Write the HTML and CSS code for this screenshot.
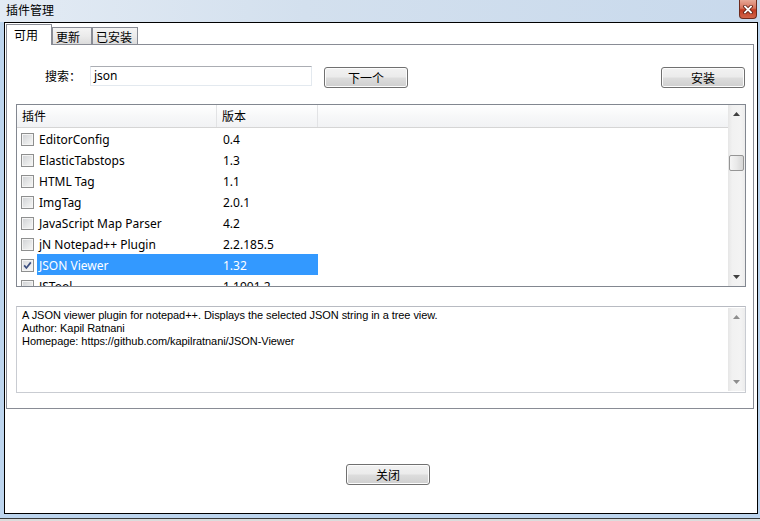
FILE: index.html
```html
<!DOCTYPE html>
<html lang="zh">
<head>
<meta charset="utf-8">
<title>插件管理</title>
<link rel="stylesheet" href="styles.css">
</head>
<body>
<div class="window">
  <div class="titlebar">
    <span class="title">插件管理</span>
    <span class="xbtn"><svg width="10" height="9" viewBox="0 0 10 9"><path d="M2 1.5 L8 7.5 M8 1.5 L2 7.5" stroke="#5a1a0e" stroke-width="3.4" stroke-linecap="square"/><path d="M2 1.5 L8 7.5 M8 1.5 L2 7.5" stroke="#ffffff" stroke-width="1.8" stroke-linecap="square"/></svg></span>
  </div>
  <div class="client">
    <div class="tabs">
      <div class="tab active">可用</div>
      <div class="tab">更新</div>
      <div class="tab wide">已安装</div>
    </div>
    <div class="panel">
      <div class="search-row">
        <span class="search-label">搜索：</span>
        <div class="input">json</div>
        <button class="btn next">下一个</button>
        <span class="spacer"></span>
        <button class="btn install">安装</button>
      </div>
      <div class="list">
        <div class="list-main">
          <div class="header">
            <div class="hcol c1">插件</div>
            <div class="hcol c2">版本</div>
            <div class="hcol c3"></div>
          </div>
          <div class="rows">
            <div class="row"><span class="cb"></span><span class="cells"><span class="name">EditorConfig</span><span class="ver">0.4</span></span></div>
            <div class="row"><span class="cb"></span><span class="cells"><span class="name">ElasticTabstops</span><span class="ver">1.3</span></span></div>
            <div class="row"><span class="cb"></span><span class="cells"><span class="name">HTML Tag</span><span class="ver">1.1</span></span></div>
            <div class="row"><span class="cb"></span><span class="cells"><span class="name">ImgTag</span><span class="ver">2.0.1</span></span></div>
            <div class="row"><span class="cb"></span><span class="cells"><span class="name">JavaScript Map Parser</span><span class="ver">4.2</span></span></div>
            <div class="row"><span class="cb"></span><span class="cells"><span class="name">jN Notepad++ Plugin</span><span class="ver">2.2.185.5</span></span></div>
            <div class="row selected"><span class="cb checked"><svg width="11" height="11" viewBox="0 0 11 11"><path d="M2.2 5.4 L4.4 8 L8.8 2.4" fill="none" stroke="#3d4f80" stroke-width="1.7"/></svg></span><span class="cells"><span class="name">JSON Viewer</span><span class="ver">1.32</span></span></div>
            <div class="row"><span class="cb"></span><span class="cells"><span class="name">JSTool</span><span class="ver">1.1901.2</span></span></div>
          </div>
        </div>
        <div class="vscroll">
          <div class="sbtn"><svg width="17" height="17" viewBox="0 0 17 17"><polygon points="5,11 8.5,7 12,11" fill="#3f3f3f"/></svg></div>
          <div class="track">
            <div class="thumb-space"></div>
            <div class="thumb"></div>
          </div>
          <div class="sbtn"><svg width="17" height="17" viewBox="0 0 17 17"><polygon points="5,6 12,6 8.5,10" fill="#3f3f3f"/></svg></div>
        </div>
      </div>
      <div class="desc">
        <div class="desc-text">
          <div>A JSON viewer plugin for notepad++. Displays the selected JSON string in a tree view.</div>
          <div>Author: Kapil Ratnani</div>
          <div>Homepage: https://github.com/kapilratnani/JSON-Viewer</div>
        </div>
        <div class="vscroll small">
          <div class="sbtn"><svg width="17" height="17" viewBox="0 0 17 17"><polygon points="5,11 8.5,7 12,11" fill="#8d8d8d"/></svg></div>
          <div class="track"></div>
          <div class="sbtn"><svg width="17" height="17" viewBox="0 0 17 17"><polygon points="5,6 12,6 8.5,10" fill="#8d8d8d"/></svg></div>
        </div>
      </div>
    </div>
    <div class="footer">
      <button class="btn closebtn">关闭</button>
    </div>
  </div>
  <div class="bottom-edge"></div>
</div>
</body>
</html>
```

FILE: styles.css
```css
* { box-sizing: border-box; }
html, body { margin: 0; padding: 0; }
body {
  width: 760px;
  height: 521px;
  overflow: hidden;
  background: #bcd4ed;
  font-family: "Noto Sans CJK SC", "Noto Sans", sans-serif;
  font-size: 12px;
  color: #000;
}
.window {
  width: 760px;
  height: 521px;
  display: flex;
  flex-direction: column;
  background: #bdd5ee;
}
.titlebar {
  height: 22px;
  display: flex;
  align-items: flex-start;
  background: linear-gradient(to right, #e3ebf4 0%, #d3e0ee 40%, #c8d9ec 100%);
}
.title {
  margin-left: 6px;
  margin-top: 2px;
  line-height: 16px;
  font-size: 12px;
  color: #000;
  font-family: "Noto Sans CJK SC", sans-serif;
}
.xbtn {
  margin-left: auto;
  margin-right: 3px;
  width: 18px;
  height: 19px;
  border: 1px solid #6e2a1c;
  border-top: none;
  border-radius: 0 0 4px 4px;
  background: linear-gradient(to bottom, #e7a896 0%, #d7735c 45%, #c03a21 55%, #d2654a 100%);
  display: flex;
  align-items: center;
  justify-content: center;
}
.client {
  margin-left: 4px;
  width: 754px;
  height: 492px;
  border: 1px solid #000;
  background: #fff;
  display: flex;
  flex-direction: column;
}
.tabs {
  height: 21px;
  margin-left: 1px;
  display: flex;
  align-items: flex-end;
}
.tab {
  height: 17px;
  width: 40px;
  border: 1px solid #898c95;
  border-bottom: none;
  background: linear-gradient(to bottom, #f4f4f4 0%, #ebebeb 50%, #dcdcdc 100%);
  padding-left: 3px;
  line-height: 17px;
  font-size: 12px;
}
.tab.wide { width: 46px; }
.tab.active {
  position: relative;
  z-index: 1;
  width: 46px;
  height: 21px;
  margin-bottom: -1px;
  margin-right: 0;
  background: #fff;
  padding-left: 7px;
  line-height: 20px;
}
.panel {
  margin-left: 1px;
  width: 748px;
  height: 365px;
  border: 1px solid #898c95;
  padding: 21px 7px 0 9px;
  display: flex;
  flex-direction: column;
}
.search-row {
  display: flex;
  align-items: flex-start;
  height: 22px;
}
.search-label {
  margin-left: 29px;
  width: 45px;
  line-height: 20px;
  font-size: 12px;
}
.input {
  width: 222px;
  height: 20px;
  border: 1px solid #e3e9ef;
  border-top-color: #abadb3;
  padding-left: 3px;
  font-family: "Noto Sans", sans-serif;
  font-size: 12px;
  line-height: 18px;
}
.btn {
  width: 84px;
  height: 21px;
  border: 1px solid #707070;
  border-radius: 3px;
  background: linear-gradient(to bottom, #f2f2f2 0%, #ebebeb 48%, #dddddd 52%, #cfcfcf 100%);
  box-shadow: inset 0 0 0 1px #fcfcfc;
  font-family: "Noto Sans CJK SC", sans-serif;
  font-size: 12px;
  line-height: 17px;
  padding: 0;
  color: #000;
}
.btn.next { margin-left: 12px; margin-top: 1px; }
.btn.install { margin-top: 1px; margin-right: 1px; }
.spacer { flex: 1; }

.list {
  margin-top: 16px;
  width: 730px;
  height: 183px;
  border: 1px solid #828790;
  display: flex;
}
.list-main {
  flex: 1;
  overflow: hidden;
  display: flex;
  flex-direction: column;
}
.header {
  height: 23px;
  flex: none;
  display: flex;
  border-bottom: 1px solid #d5d5d5;
  background: linear-gradient(to bottom, #ffffff 0%, #f7f8f9 50%, #f1f2f4 100%);
}
.hcol {
  height: 22px;
  line-height: 22px;
  padding-left: 5px;
  font-size: 12px;
  border-right: 1px solid #e2e3e5;
}
.hcol.c1 { width: 200px; }
.hcol.c2 { width: 101px; }
.hcol.c3 { flex: 1; border-right: none; }
.rows {
  flex: 1;
  overflow: hidden;
}
.row {
  height: 21px;
  display: flex;
  align-items: center;
  font-family: "Noto Sans", sans-serif;
  font-size: 12px;
}
.cb {
  width: 13px;
  height: 13px;
  margin: 1px 3px 0 4px;
  border: 1px solid #8e8f8f;
  background: linear-gradient(135deg, #cfd1d4 0%, #eceded 70%, #f6f6f6 100%);
  box-shadow: inset 0 0 0 1px #f4f4f4;
  display: flex;
  align-items: center;
  justify-content: center;
}
.cb.checked { background: linear-gradient(135deg, #d7d9dc 0%, #f0f0f0 70%, #f8f8f8 100%); }
.cells {
  display: flex;
  width: 281px;
  height: 21px;
  padding-top: 2px;
  line-height: 20px;
  overflow: hidden;
}
.name { width: 180px; padding-left: 2px; white-space: nowrap; }
.ver { width: 101px; padding-left: 6px; white-space: nowrap; }
.row.selected .cells { background: #3399ff; color: #fff; }

.vscroll {
  width: 17px;
  flex: none;
  display: flex;
  flex-direction: column;
  background: linear-gradient(to right, #e6e6e6 0%, #f1f1f1 25%, #f3f3f3 75%, #ececec 100%);
}
.sbtn { height: 17px; flex: none; }
.sbtn svg { display: block; }
.track {
  flex: 1;
  display: flex;
  flex-direction: column;
}
.thumb-space { height: 33px; }
.thumb {
  height: 16px;
  margin: 0 1px;
  border: 1px solid #959595;
  border-radius: 2px;
  background: linear-gradient(to right, #f5f5f5 0%, #e9e9e9 50%, #d6d6d6 100%);
}

.desc {
  margin-top: 19px;
  width: 730px;
  height: 87px;
  border: 1px solid #c9ccd2;
  border-top-color: #b8bbc2;
  display: flex;
}
.desc-text {
  flex: 1;
  padding: 2px 0 0 5px;
  font-family: "Liberation Sans", sans-serif;
  font-size: 11px;
  line-height: 13px;
  letter-spacing: -0.06px;
  color: #000;
}
.vscroll.small {
  margin: 1px 0;
}

.footer {
  margin-top: 55px;
  padding-left: 341px;
  display: flex;
}
.bottom-edge {
  margin-top: 4px;
  height: 3px;
  border-top: 1px solid #3a3a3a;
  background: #dcdcdc;
}
```
